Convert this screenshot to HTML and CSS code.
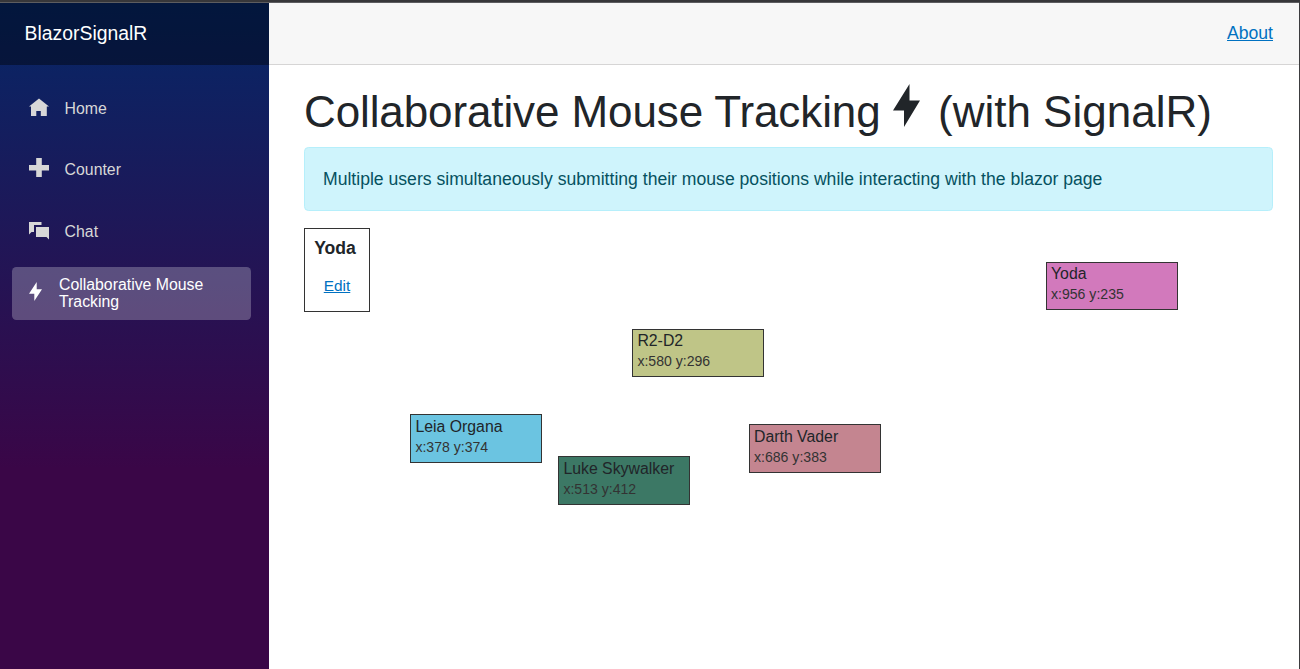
FILE: index.html
```html
<!DOCTYPE html>
<html lang="en">
<head>
<meta charset="utf-8">
<title>BlazorSignalR</title>
<link rel="stylesheet" href="styles.css">
</head>
<body>
<div class="page">
  <aside class="sidebar">
    <div class="brand">BlazorSignalR</div>
    <nav class="nav">
      <a class="nav-link">
        <svg class="icon" viewBox="0 0 20 20"><path d="M10 .5 0 8.500h2V18h5.300v-5h4.500v5h6V8.500H20z"/></svg>
        <span>Home</span>
      </a>
      <a class="nav-link">
        <svg class="icon raised" viewBox="0 0 20 20"><path d="M7.200 0h5.600v7H20v5.500h-7.200V19H7.200v-6.500H0V7h7.200z"/></svg>
        <span>Counter</span>
      </a>
      <a class="nav-link">
        <svg class="icon raised" viewBox="0 0 20 20"><path d="M0 2h12.500v3H5v7H2.500L0 14.500zM7 7h13v12.500L17.500 17H7z"/></svg>
        <span>Chat</span>
      </a>
      <a class="nav-link active">
        <svg class="bolt" viewBox="0 0 27 44" preserveAspectRatio="none"><path d="M16 0 0 27h11v17l16-27H16z"/></svg>
        <span>Collaborative Mouse Tracking</span>
      </a>
    </nav>
  </aside>
  <main class="main">
    <header class="top-row"><a class="link" href="#">About</a></header>
    <article class="content">
      <h1 class="title"><span class="title-lead">Collaborative Mouse Tracking</span> <svg class="title-bolt" viewBox="0 0 27 44" preserveAspectRatio="none"><path d="M16.500 0 0 27h11v17l16-27H16.500z"/></svg> (with SignalR)</h1>
      <div class="alert">Multiple users simultaneously submitting their mouse positions while interacting with the blazor page</div>
      <section class="board">
        <div class="profile"><b class="name">Yoda</b><a class="link edit" href="#">Edit</a></div>
        <div class="cursor yoda"><span>Yoda</span><small>x:956 y:235</small></div>
        <div class="cursor r2"><span>R2-D2</span><small>x:580 y:296</small></div>
        <div class="cursor leia"><span>Leia Organa</span><small>x:378 y:374</small></div>
        <div class="cursor vader"><span>Darth Vader</span><small>x:686 y:383</small></div>
        <div class="cursor luke"><span>Luke Skywalker</span><small>x:513 y:412</small></div>
      </section>
    </article>
  </main>
</div>
</body>
</html>
```
FILE: styles.css
```css
* { box-sizing: border-box; }
body {
  margin: 0;
  font: 17.6px/1.5 "Liberation Sans", Arial, sans-serif;
  color: #212529;
  background: #fff;
}
.page {
  display: flex;
  height: 669px;
  overflow: hidden;
  border-top: 2px solid #37373a;
  border-right: 1px solid #3c3c3f;
  box-shadow: inset 0 1px #5d5d60;
  padding-top: 1px;
}
.sidebar {
  width: 269px;
  flex: none;
  background: linear-gradient(180deg, rgb(5, 39, 103) 0%, #3a0647 70%);
}
.brand {
  height: 62px;
  padding-left: 24.6px;
  background: rgba(0, 0, 0, 0.4);
  color: #fff;
  font-size: 19.36px;
  line-height: 61px;
}
.nav {
  display: flex;
  flex-direction: column;
  gap: 8.800px;
  padding: 17px 18px 0 12px;
  font-size: 15.84px;
}
.nav-link {
  display: flex;
  align-items: center;
  height: 52.8px;
  padding-left: 17px;
  border-radius: 4.4px;
  color: #d7d7d7;
}
.icon { width: 20px; height: 20px; margin-right: 15.600px; fill: currentColor; }
.raised { margin-bottom: 3px; }
.active {
  background: rgba(255, 255, 255, 0.25);
  color: #fff;
  line-height: 17px;
}
.bolt { width: 13px; height: 19px; margin: 0 17px 2.500px 0; flex: none; fill: currentColor; }
.main { flex: 1; min-width: 0; display: flex; flex-direction: column; }
.top-row {
  height: 62px;
  flex: none;
  display: flex;
  align-items: center;
  justify-content: flex-end;
  padding-right: 26px;
  background: #f7f7f7;
  border-bottom: 1px solid #d6d5d5;
}
.link { color: #0071c1; text-decoration: underline; }
.content { flex: 1; padding: 19px 26px 0 35px; }
.title { margin: 0 0 10px; height: 53px; font-size: 44px; font-weight: 400; line-height: 53px; white-space: nowrap; }
.title-lead { letter-spacing: -0.11px; }
.title-bolt { width: 27px; height: 43px; margin-right: 6px; vertical-align: 0; fill: currentColor; }
.alert {
  height: 64px;
  padding: 18px;
  border: 1px solid #b6effb;
  border-radius: 4.4px;
  background: #cff4fc;
  color: #055160;
}
.board { position: relative; height: 430px; padding-top: 17px; }
.profile {
  display: flex;
  flex-direction: column;
  align-items: center;
  width: 66px;
  height: 84px;
  padding-top: 6px;
  border: 1px solid #333;
}
.name { margin-right: 4px; }
.edit { margin-top: 13px; font-size: 15.4px; line-height: 23px; }
.cursor {
  position: absolute;
  display: flex;
  flex-direction: column;
  width: 132px;
  height: 49px;
  padding: 0 4.400px;
  border: 1px solid #333;
  font-size: 15.84px;
  line-height: 23px;
}
.cursor small { font-size: 14.08px; line-height: 19px; color: #333; }
.yoda, .r2 { height: 48px; line-height: 21px; }
.yoda small, .r2 small { line-height: 21px; }
.yoda { left: 742px; top: 51px; padding-left: 4px; background: #d279bc; }
.r2 { left: 328px; top: 118px; background: #bfc587; }
.leia { left: 106px; top: 203px; background: #6bc4e1; }
.vader { left: 445px; top: 213px; padding-left: 4px; background: #c48590; }
.luke { left: 254px; top: 245px; background: #3c7865; }
```
